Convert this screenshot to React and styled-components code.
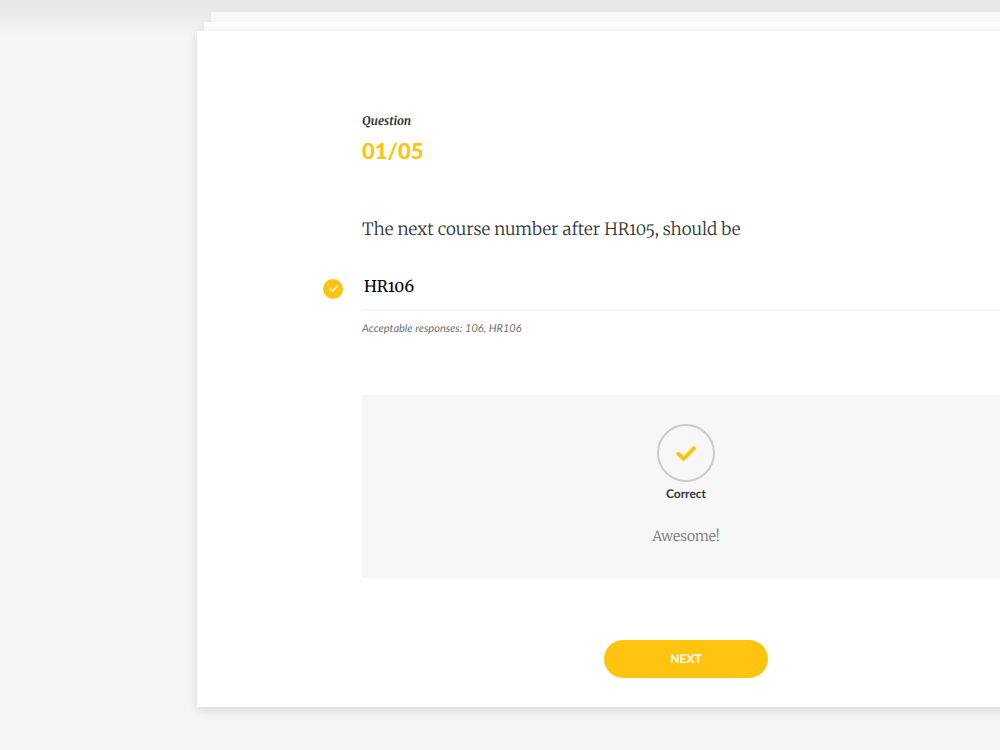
import React from 'react'
import styled, { createGlobalStyle } from 'styled-components'

const serif = 'Merriweather, "Noto Serif", "Liberation Serif", serif'
const sans = 'Lato, "Liberation Sans", sans-serif'
const accent = '#ffc40f'

const GlobalStyle = createGlobalStyle`
  * {
    box-sizing: border-box;
  }

  body {
    margin: 0;
    background: #f5f5f5;
    font-family: ${sans};
    color: #313537;
    text-rendering: geometricPrecision;
    -webkit-font-smoothing: antialiased;
  }
`

const Page = styled.div`
  min-height: 100vh;
  overflow: hidden;
  padding: 12px 0 43px 197px;
  background: linear-gradient(#e7e7e7, #e8e8e8 8px, #f5f5f5 36px);
`

/* The deck runs past the right edge of the window */
const Deck = styled.main`
  margin-right: -175px;
`

const Sheet = styled.div`
  height: ${({ $height }) => $height}px;
  margin: 0 ${({ $inset }) => $inset}px;
  background: ${({ $color }) => $color};
  box-shadow: 0 2px 8px rgba(0, 0, 0, 0.05);
`

const Card = styled.section`
  position: relative;
  padding: 81px 165px 29px;
  background: #fff;
  box-shadow: 0 3px 10px rgba(0, 0, 0, 0.12);
`

const Label = styled.div`
  font: italic bold 12px/20px ${serif};
`

const Counter = styled.div`
  margin-top: 4px;
  font-size: 22px;
  font-weight: 900;
  line-height: 30px;
  color: ${accent};
`

const Title = styled.h1`
  margin: 48px 0 0;
  font: 300 17px/30px ${serif};
  font-variant-numeric: oldstyle-nums;
`

const Answer = styled.div`
  display: flex;
  align-items: center;
  margin: 22px 0 0 -39px;
`

const Badge = styled.span`
  display: flex;
  align-items: center;
  justify-content: center;
  width: 20px;
  height: 20px;
  margin-right: 19px;
  border-radius: 50%;
  background: ${accent};
`

const Input = styled.input`
  flex: 1;
  min-width: 0;
  height: 45px;
  padding: 0 2px 2px;
  border: 0;
  border-bottom: 2px solid #f7f7f7;
  outline: none;
  background: transparent;
  font: 16px ${serif};
  font-variant-numeric: oldstyle-nums;
  text-rendering: inherit;
  color: #000;
`

const Hint = styled.p`
  margin: 8px 0 0;
  font-size: 11px;
  font-style: italic;
  line-height: 20px;
  color: #707070;
`

const Feedback = styled.div`
  display: flex;
  flex-direction: column;
  align-items: center;
  margin-top: 56px;
  padding: 29px 20px;
  background: #f7f7f7;
`

const Ring = styled.div`
  display: flex;
  align-items: center;
  justify-content: center;
  width: 58px;
  height: 58px;
  border: 2px solid #cbcbcb;
  border-radius: 50%;
`

const Status = styled.strong`
  margin-top: 2px;
  font-size: 12px;
  line-height: 20px;
`

const Message = styled.p`
  margin: 19px 0 0;
  font: 300 14px/26px ${serif};
  color: #757575;
`

const Next = styled.button`
  display: block;
  width: 164px;
  height: 38px;
  margin: 62px auto 0;
  padding: 0 0 2px;
  border: 0;
  border-radius: 19px;
  background: ${accent};
  font: bold 12px ${sans};
  text-rendering: inherit;
  color: #fff;
  cursor: pointer;
`

const Check = ({ size, color, thickness }) => (
  <svg width={size} height={size} viewBox="0 0 20 20" fill="none" aria-hidden="true">
    <path
      d="M2.2 10.8 L7.6 15.8 L18 5.2"
      stroke={color}
      strokeWidth={thickness}
      strokeLinecap="round"
    />
  </svg>
)

const App = () => (
  <Page>
    <GlobalStyle />
    <Deck>
      <Sheet $height={10} $inset={14} $color="#f8f8f8" />
      <Sheet $height={9} $inset={7} $color="#fdfdfd" />
      <Card>
        <Label>Question</Label>
        <Counter>01/05</Counter>
        <Title id="question">The next course number after HR105, should be</Title>
        <Answer>
          <Badge>
            <Check size={9} color="#fff" thickness={3} />
          </Badge>
          <Input aria-labelledby="question" defaultValue="HR106" />
        </Answer>
        <Hint>Acceptable responses: 106, HR106</Hint>
        <Feedback>
          <Ring>
            <Check size={20} color={accent} thickness={4} />
          </Ring>
          <Status>Correct</Status>
          <Message>Awesome!</Message>
        </Feedback>
        <Next type="button">NEXT</Next>
      </Card>
    </Deck>
  </Page>
)

export default App
